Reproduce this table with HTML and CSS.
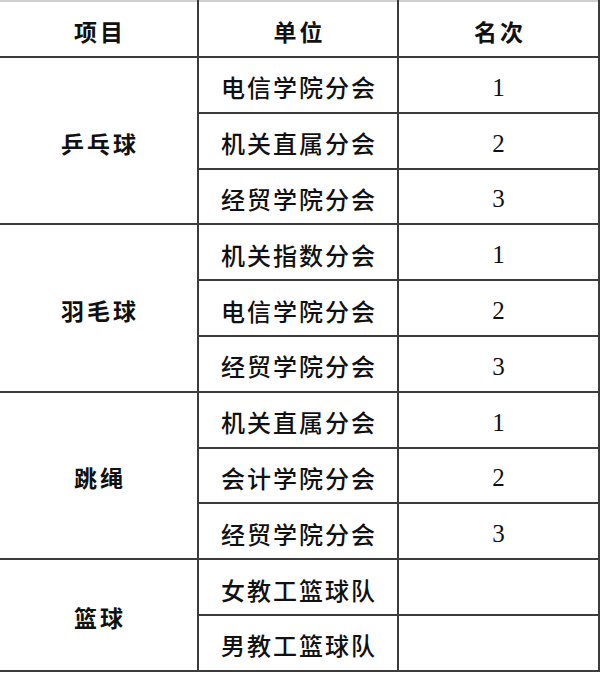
FILE: index.html
```html
<!DOCTYPE html>
<html lang="zh">
<head>
<meta charset="utf-8">
<title>比赛名次</title>
<link rel="stylesheet" href="styles.css">
</head>
<body>
<table class="rank">
  <colgroup>
    <col class="c1"><col class="c2"><col class="c3">
  </colgroup>
  <thead>
    <tr class="head">
      <th class="item">项目</th>
      <th class="unit">单位</th>
      <th class="place">名次</th>
    </tr>
  </thead>
  <tbody>
    <tr>
      <td class="item" rowspan="3">乒乓球</td>
      <td class="unit">电信学院分会</td>
      <td class="place">1</td>
    </tr>
    <tr><td class="unit">机关直属分会</td><td class="place">2</td></tr>
    <tr><td class="unit">经贸学院分会</td><td class="place">3</td></tr>
    <tr>
      <td class="item" rowspan="3">羽毛球</td>
      <td class="unit">机关指数分会</td>
      <td class="place">1</td>
    </tr>
    <tr><td class="unit">电信学院分会</td><td class="place">2</td></tr>
    <tr><td class="unit">经贸学院分会</td><td class="place">3</td></tr>
    <tr>
      <td class="item" rowspan="3">跳绳</td>
      <td class="unit">机关直属分会</td>
      <td class="place">1</td>
    </tr>
    <tr><td class="unit">会计学院分会</td><td class="place">2</td></tr>
    <tr><td class="unit">经贸学院分会</td><td class="place">3</td></tr>
    <tr>
      <td class="item" rowspan="2">篮球</td>
      <td class="unit">女教工篮球队</td>
      <td class="place"></td>
    </tr>
    <tr><td class="unit">男教工篮球队</td><td class="place"></td></tr>
  </tbody>
</table>
</body>
</html>
```

FILE: styles.css
```css
html, body {
  margin: 0;
  padding: 0;
  background: #ffffff;
}

body {
  font-family: "Noto Sans CJK SC", "Noto Sans", sans-serif;
  color: #111;
}

.rank {
  border-collapse: collapse;
  table-layout: fixed;
  width: 599px;
  border-top: 2px solid #d0d0d0;
}

.c1 { width: 198px; }
.c2 { width: 200px; }
.c3 { width: 201px; }

.rank tr {
  height: 55.8px;
}

.rank tr.head {
  height: 56px;
}

.rank th,
.rank td {
  padding: 5px 0 0 0;
  text-align: center;
  vertical-align: middle;
  border-right: 2px solid #3c3c3c;
  border-bottom: 2px solid #3c3c3c;
  border-top: 0;
  border-left: 0;
  line-height: 1;
}

.rank th {
  font-size: 23px;
  font-weight: 700;
  letter-spacing: 3px;
  text-indent: 3px;
}

.rank td.item {
  font-size: 23px;
  font-weight: 700;
  letter-spacing: 3px;
  text-indent: 3px;
}

.rank td.unit {
  font-size: 24px;
  font-weight: 500;
  letter-spacing: 2px;
  text-indent: 2px;
}

.rank td.place {
  font-family: "Liberation Serif", "Times New Roman", serif;
  font-size: 25px;
}
```
